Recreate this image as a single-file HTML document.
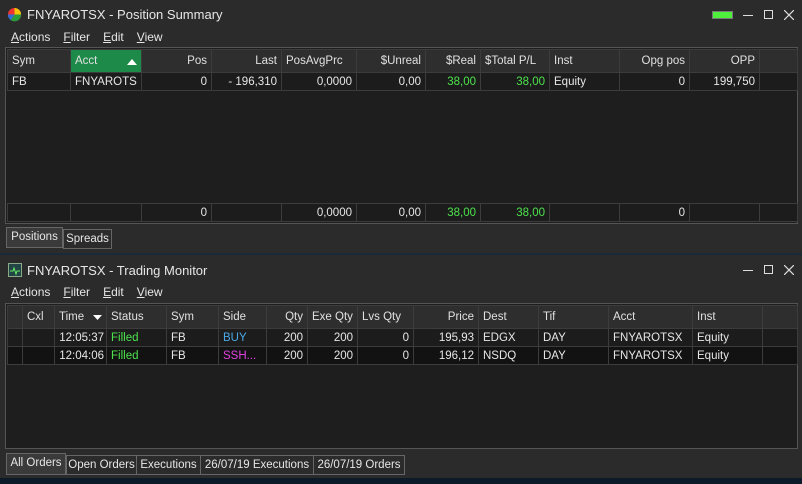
<!DOCTYPE html>
<html><head><style>
*{margin:0;padding:0;box-sizing:border-box}
body{width:802px;height:484px;background:#2b2b2b;font-family:"Liberation Sans",sans-serif;font-size:12px;color:#e6e6e6;position:relative;overflow:hidden}
.a{position:absolute}
table{border-collapse:collapse;table-layout:fixed;position:absolute}
td{border:1px solid #3c3c3c;height:18px;padding:0 4px;white-space:nowrap;overflow:hidden;font-size:11.5px}
tr.h td{background:#2e2e2e;height:23px;color:#e0e0e0}
tr.d td{background:#1c1c1c}
tr.d2 td{background:#121212}
.r{text-align:right}
.g{color:#4de34d}
.grid{position:absolute;background:#1e1e1e;border:1px solid #555}
.menu span{margin-right:13px}
.menu u{text-decoration:underline}
.tab{position:absolute;border:1px solid #666;background:#2b2b2b;height:20px;padding:3px 0 0;font-size:11.5px;white-space:nowrap;text-align:center;overflow:hidden}
</style></head><body>
<svg class="a" style="left:7px;top:7px" width="15" height="15" viewBox="0 0 16 16"><circle cx="8" cy="8" r="7" fill="#e33"/><path d="M8 8L8 1A7 7 0 0 1 15 8Z" fill="#f5c400"/><path d="M8 8L15 8A7 7 0 0 1 4 14Z" fill="#2a9d3a"/><path d="M8 8L4 14A7 7 0 0 1 1 8Z" fill="#2f6fd8"/></svg>
<div class="a" style="left:27px;top:7px;font-size:13px">FNYAROTSX - Position Summary</div>
<div class="a" style="left:712px;top:11px;width:21px;height:8px;border:1px solid #777;background:#4ef03c"></div>
<div class="a" style="left:743px;top:15px;width:10px;height:1px;background:#ddd"></div>
<div class="a" style="left:764px;top:10px;width:9px;height:9px;border:1px solid #ddd"></div>
<svg class="a" style="left:784px;top:10px" width="10" height="10"><path d="M0 0L10 10M10 0L0 10" stroke="#ddd" stroke-width="1.2"/></svg>
<div class="a menu" style="left:11px;top:30px;font-size:12px"><span><u>A</u>ctions</span><span><u>F</u>ilter</span><span><u>E</u>dit</span><span><u>V</u>iew</span></div>
<div class="grid" style="left:5px;top:47px;width:793px;height:177px"></div>
<table style="left:7px;top:49px;width:790px">
<colgroup><col style="width:63px"><col style="width:71px"><col style="width:70px"><col style="width:70px"><col style="width:75px"><col style="width:69px"><col style="width:55px"><col style="width:69px"><col style="width:70px"><col style="width:70px"><col style="width:70px"><col style="width:38px"></colgroup>
<tr class="h"><td>Sym</td><td style="background:#1e8a4a">Acct <svg style="float:right;margin-top:4px" width="10" height="6"><path d="M0 6L5 0L10 6Z" fill="#fff"/></svg></td><td class="r">Pos</td><td class="r">Last</td><td>PosAvgPrc</td><td class="r">$Unreal</td><td class="r">$Real</td><td>$Total P/L</td><td>Inst</td><td class="r">Opg pos</td><td class="r">OPP</td><td></td></tr>
<tr class="d"><td>FB</td><td>FNYAROTS</td><td class="r">0</td><td class="r">- 196,310</td><td class="r">0,0000</td><td class="r">0,00</td><td class="r g">38,00</td><td class="r g">38,00</td><td>Equity</td><td class="r">0</td><td class="r">199,750</td><td></td></tr>
</table>
<table style="left:7px;top:203px;width:790px">
<colgroup><col style="width:63px"><col style="width:71px"><col style="width:70px"><col style="width:70px"><col style="width:75px"><col style="width:69px"><col style="width:55px"><col style="width:69px"><col style="width:70px"><col style="width:70px"><col style="width:70px"><col style="width:38px"></colgroup>
<tr class="d"><td></td><td></td><td class="r">0</td><td></td><td class="r">0,0000</td><td class="r">0,00</td><td class="r g">38,00</td><td class="r g">38,00</td><td></td><td class="r">0</td><td></td><td></td></tr>
</table>
<div class="tab" style="left:6px;top:227px;width:57px;height:21px;background:#3a3a3a;padding-top:3px">Positions</div>
<div class="tab" style="left:63px;top:229px;width:49px">Spreads</div>
<div class="a" style="left:0;top:253px;width:802px;height:2px;background:#1a2a3a"></div>
<div class="a" style="left:8px;top:263px;width:14px;height:14px;background:#244;border:1px solid #8a8"><svg width="12" height="12"><path d="M1 7H4L5 4L7 10L8 7H11" stroke="#6e6" fill="none"/></svg></div>
<div class="a" style="left:27px;top:263px;font-size:13px">FNYAROTSX - Trading Monitor</div>
<div class="a" style="left:743px;top:270px;width:10px;height:1px;background:#ddd"></div>
<div class="a" style="left:764px;top:265px;width:9px;height:9px;border:1px solid #ddd"></div>
<svg class="a" style="left:784px;top:265px" width="10" height="10"><path d="M0 0L10 10M10 0L0 10" stroke="#ddd" stroke-width="1.2"/></svg>
<div class="a menu" style="left:11px;top:285px"><span><u>A</u>ctions</span><span><u>F</u>ilter</span><span><u>E</u>dit</span><span><u>V</u>iew</span></div>
<div class="grid" style="left:5px;top:303px;width:793px;height:146px"></div>
<table style="left:7px;top:305px;width:790px">
<colgroup><col style="width:15px"><col style="width:32px"><col style="width:52px"><col style="width:60px"><col style="width:52px"><col style="width:48px"><col style="width:41px"><col style="width:50px"><col style="width:56px"><col style="width:65px"><col style="width:60px"><col style="width:70px"><col style="width:84px"><col style="width:70px"><col style="width:35px"></colgroup>
<tr class="h"><td></td><td>Cxl</td><td>Time <svg style="float:right;margin-top:4px" width="9" height="5"><path d="M0 0L9 0L4.5 5Z" fill="#fff"/></svg></td><td>Status</td><td>Sym</td><td>Side</td><td class="r">Qty</td><td>Exe Qty</td><td>Lvs Qty</td><td class="r">Price</td><td>Dest</td><td>Tif</td><td>Acct</td><td>Inst</td><td></td></tr>
<tr class="d"><td></td><td></td><td class="r" style="padding:0 2px">12:05:37</td><td class="g">Filled</td><td>FB</td><td style="color:#4aa8e8">BUY</td><td class="r">200</td><td class="r">200</td><td class="r">0</td><td class="r">195,93</td><td>EDGX</td><td>DAY</td><td>FNYAROTSX</td><td>Equity</td><td></td></tr>
<tr class="d2"><td></td><td></td><td class="r" style="padding:0 2px">12:04:06</td><td class="g">Filled</td><td>FB</td><td style="color:#e040e0">SSH...</td><td class="r">200</td><td class="r">200</td><td class="r">0</td><td class="r">196,12</td><td>NSDQ</td><td>DAY</td><td>FNYAROTSX</td><td>Equity</td><td></td></tr>
</table>
<div class="tab" style="left:6px;top:453px;width:60px;height:22px;background:#3a3a3a">All Orders</div>
<div class="tab" style="left:66px;top:455px;width:71px">Open Orders</div>
<div class="tab" style="left:136px;top:455px;width:65px">Executions</div>
<div class="tab" style="left:200px;top:455px;width:114px">26/07/19 Executions</div>
<div class="tab" style="left:313px;top:455px;width:92px">26/07/19 Orders</div>
<div class="a" style="left:0;top:478px;width:802px;height:6px;background:#0d1a2a"></div>
</body></html>
